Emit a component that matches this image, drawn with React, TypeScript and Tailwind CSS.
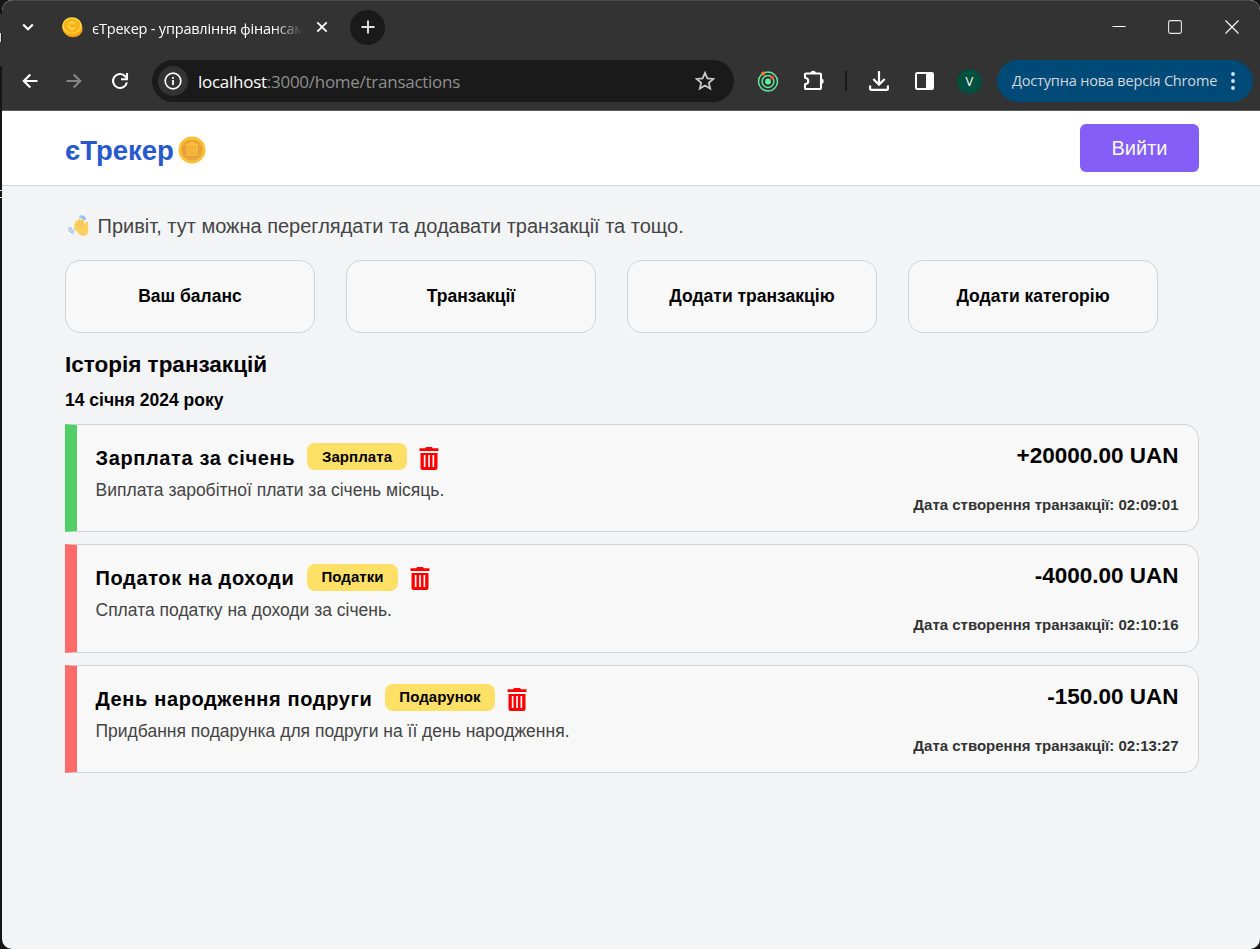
import React from "react";

type Transaction = {
  title: string;
  category: string;
  description: string;
  amount: string;
  time: string;
  accent: string;
  titleWidth: string;
  badgeWidth: string;
};

const transactions: Transaction[] = [
  {
    title: "Зарплата за січень",
    category: "Зарплата",
    description: "Виплата заробітної плати за січень місяць.",
    amount: "+20000.00 UAN",
    time: "02:09:01",
    accent: "border-l-[#51cf66]",
    titleWidth: "w-[211.500px]",
    badgeWidth: "w-[100px]",
  },
  {
    title: "Податок на доходи",
    category: "Податки",
    description: "Сплата податку на доходи за січень.",
    amount: "-4000.00 UAN",
    time: "02:10:16",
    accent: "border-l-[#ff6b6b]",
    titleWidth: "w-[211.500px]",
    badgeWidth: "w-[91px]",
  },
  {
    title: "День народження подруги",
    category: "Подарунок",
    description: "Придбання подарунка для подруги на її день народження.",
    amount: "-150.00 UAN",
    time: "02:13:27",
    accent: "border-l-[#ff6b6b]",
    titleWidth: "w-[289.500px]",
    badgeWidth: "w-[110px]",
  },
];

const menu = ["Ваш баланс", "Транзакції", "Додати транзакцію", "Додати категорію"];

function TabCoin() {
  return (
    <svg width="21" height="21" viewBox="0 0 21 21" className="shrink-0">
      <ellipse cx="11" cy="12.6" rx="9.6" ry="7.6" fill="#f59a0c" />
      <ellipse cx="10.3" cy="10.4" rx="10" ry="8.6" fill="#fba919" />
      <ellipse cx="10" cy="8.6" rx="9.8" ry="8.4" fill="#fed843" />
      <ellipse cx="10" cy="8.8" rx="8.300" ry="7" fill="#fbb417" />
      <path d="M12.9 7.2c-.5-1.2-1.6-1.8-2.9-1.8-1.900 0-3.200 1.300-3.200 3.100s1.300 3.300 3.300 3.300c1.300 0 2.300-.5 2.900-1.500M9.700 4v1.400M10.300 11.800v1.400" fill="none" stroke="#fee05a" strokeWidth="1.200" />
    </svg>
  );
}

function BankCoin() {
  return (
    <svg width="28" height="28" viewBox="0 0 28 28" className="mt-[4px] shrink-0">
      <circle cx="14" cy="14" r="13.500" fill="#fac036" />
      <circle cx="14" cy="14" r="10.600" fill="#e9a23b" />
      <path d="M14 5.500l6.300 3.300v1.700H7.700V8.800zM8.700 11.300h2v6h-2zM11.700 11.300h1.900v6h-1.900zM14.600 11.300h1.900v6h-1.900zM17.500 11.300h2v6h-2zM7.700 18h12.600v1.500H7.700z" fill="#fac036" />
    </svg>
  );
}

function Wave() {
  return (
    <svg width="22" height="22" viewBox="0 0 22 22" className="shrink-0">
      <g fill="none" stroke="#fccf60" strokeLinecap="round" strokeWidth="2.900">
        <path d="M13.500 14L8.300 9.700M14 12.500L9.600 7M15.500 11.500L12 5.200M17 11.500L15 5.300M12 16L8 13" />
      </g>
      <path d="M8.500 12.500L16.800 8L18.300 9.800Q18.300 6 20 6.200Q21.200 6.500 21.200 10V16Q21 20.800 16.500 20.800Q13.300 20.800 11 18.300Z" fill="#fccf60" />
      <path d="M9.300 8.700l4 4.200M11.200 6.200l3.500 5.200M13.800 5.300l2.500 5" fill="none" stroke="#e8a94c" strokeWidth=".5" />
      <path d="M12.500 2.400q3.700-.5 5 2.600M14 1q3.600.2 4.500 3M3.600 12.300q.2 3 3.200 4M1.600 12.800q.3 4 4.600 5.500" fill="none" stroke="#96bdf4" strokeWidth="1.300" strokeLinecap="round" />
    </svg>
  );
}

function Trash() {
  return (
    <svg width="20" height="24" viewBox="0 0 20 24" className="shrink-0">
      <path d="M6.500 1.300V.800Q6.500 0 7.300 0h5.400q.8 0 .8.800v.500H19q.5 0 .5.500V3.500q0 .5-.5.500H1q-.5 0-.5-.500V1.800q0-.500.500-.500z" fill="#ff0000" />
      <path fillRule="evenodd" d="M1.500 6h17v15q0 2-2 2h-13q-2 0-2-2zM4.800 8v12h1.700V8zM9.200 8v12h1.700V8zM13.500 8v12h1.700V8z" fill="#ff0000" />
    </svg>
  );
}

function TabStrip() {
  return (
    <div className="flex h-[52px] items-center text-white">
      <svg width="12" height="8" viewBox="0 0 12 8" className="ml-[19.500px] shrink-0">
        <path d="M1.200 1.500L6 6.200l4.800-4.700" fill="none" stroke="#fff" strokeWidth="2.100" />
      </svg>
      <div className="ml-[28.500px] flex items-center">
        <TabCoin />
        <div className="ml-[9px] w-[211px] overflow-hidden whitespace-nowrap pt-[3px] font-['Open_Sans','Noto_Sans',sans-serif] text-[14.500px] leading-[22px] tracking-[-0.200px] [mask-image:linear-gradient(to_right,#000_86%,transparent)]">
          єТрекер - управління фінансам
        </div>
      </div>
      <svg width="12" height="12" viewBox="0 0 12 12" className="ml-[13px] shrink-0">
        <path d="M1.300 1.300l9.400 9.400M10.700 1.300l-9.400 9.400" stroke="#fff" strokeWidth="1.800" />
      </svg>
      <div className="ml-[22px] flex size-[35px] items-center justify-center rounded-full bg-[#1a1a1a]">
        <svg width="14" height="14" viewBox="0 0 14 14">
          <path d="M7 .5v13M.5 7h13" stroke="#e3e3e3" strokeWidth="1.900" />
        </svg>
      </div>
      <div className="ml-auto mr-[21.500px] flex items-center">
        <svg width="14" height="14" viewBox="0 0 14 14">
          <path d="M.5 6.500h13" stroke="#fff" />
        </svg>
        <svg width="14" height="14" viewBox="0 0 14 14" className="ml-[42px]">
          <rect x=".6" y=".6" width="12.800" height="12.800" rx="1.800" fill="none" stroke="#e8e8e8" strokeWidth="1.100" />
        </svg>
        <svg width="14" height="14" viewBox="0 0 14 14" className="ml-[43px]">
          <path d="M.5 .5l13 13M13.500 .5l-13 13" stroke="#fff" strokeWidth="1.100" />
        </svg>
      </div>
    </div>
  );
}

function Toolbar() {
  return (
    <div className="flex h-[56px] items-center text-white">
      <svg width="16" height="16" viewBox="0 0 16 16" className="ml-[20px] shrink-0">
        <path d="M15.500 8H2M8.300 1.500L1.800 8l6.500 6.500" fill="none" stroke="#fff" strokeWidth="2.100" />
      </svg>
      <svg width="16" height="16" viewBox="0 0 16 16" className="ml-[28px] shrink-0">
        <path d="M.5 8H14M7.700 1.500L14.200 8l-6.500 6.500" fill="none" stroke="#868686" strokeWidth="2.100" />
      </svg>
      <svg width="18" height="18" viewBox="0 0 18 18" className="ml-[28.500px] shrink-0">
        <path d="M15.900 10.400A7 7 0 1 1 14.200 4.200L15.700 6" fill="none" stroke="#fff" strokeWidth="2.100" />
        <path d="M16 1v6.300H10" fill="none" stroke="#fff" strokeWidth="2.100" />
      </svg>
      <div className="ml-[23.500px] flex h-[42px] w-[582px] items-center rounded-full bg-[#1a1a1a]">
        <div className="ml-[6px] flex size-[30px] items-center justify-center rounded-full bg-[#333]">
          <svg width="18" height="18" viewBox="0 0 18 18">
            <circle cx="9" cy="9" r="7.800" fill="none" stroke="#fff" strokeWidth="1.700" />
            <path d="M9 8v5M9 5v1.800" stroke="#fff" strokeWidth="1.800" />
          </svg>
        </div>
        <div className="ml-[10px] whitespace-nowrap pt-[2px] font-['Open_Sans','Noto_Sans',sans-serif] text-[17px] leading-[24px] tracking-[-0.270px] text-[#8f8f8f]">
          <span className="text-white">localhost</span>:3000/home/transactions
        </div>
        <svg width="20" height="20" viewBox="0 0 20 20" className="ml-auto mr-[19px] shrink-0">
          <path d="M10 1.900l2.400 5.500 6 .5-4.600 3.900 1.400 5.800L10 14.500l-5.200 3.100 1.400-5.800L1.600 7.900l6-.5z" fill="none" stroke="#c7c7c7" strokeWidth="1.800" />
        </svg>
      </div>
      <svg width="22" height="22" viewBox="0 0 22 22" className="ml-[22.500px] shrink-0">
        <g fill="none" stroke="#5ee6a0" strokeWidth="1.500">
          <circle cx="11" cy="11.500" r="9.500" />
          <circle cx="11" cy="11.500" r="5.900" />
        </g>
        <circle cx="11" cy="11.500" r="2.900" fill="#63f09a" />
        <circle cx="6.200" cy="3.500" r="2" fill="#f4772e" />
        <circle cx="15.200" cy="7.600" r="2" fill="#f4502e" />
      </svg>
      <svg width="22" height="22" viewBox="0 0 22 22" className="ml-[24px] shrink-0">
        <path d="M3 3.500h14q1 0 1 1v13.500q0 1-1 1H3q-1 0-1-1v-3.700c2-.3 3.300-1.600 3.300-3.300S4 8 2 7.700V4.500q0-1 1-1z" fill="none" stroke="#fff" strokeWidth="2.100" strokeLinejoin="round" />
        <path d="M7.500 3.500a2.700 2.700 0 0 1 5.400 0zM18 8.500a2.700 2.700 0 0 1 0 5.400z" fill="#fff" />
      </svg>
      <div className="ml-[20.500px] h-[20px] w-[2px] bg-[#191919]" />
      <svg width="20" height="20" viewBox="0 0 20 20" className="ml-[22px] shrink-0">
        <path d="M10 0v13M4.300 8l5.700 5.700L15.700 8" fill="none" stroke="#fff" strokeWidth="2.200" />
        <path d="M1.100 14.500v3q0 1.400 1.400 1.400h15q1.400 0 1.400-1.400v-3" fill="none" stroke="#fff" strokeWidth="2.200" />
      </svg>
      <svg width="19" height="18" viewBox="0 0 19 18" className="ml-[26px] shrink-0">
        <rect x="1" y="1" width="17" height="16" rx="1.200" fill="none" stroke="#fff" strokeWidth="2" />
        <path d="M11 1h7v16h-7z" fill="#fff" />
      </svg>
      <div className="ml-[23px] flex size-[25px] items-center justify-center rounded-full bg-[#004f3f] font-['Open_Sans','Noto_Sans',sans-serif] text-[13px] leading-[20px]">
        V
      </div>
      <div className="ml-[15px] flex h-[42px] w-[256px] shrink-0 items-center rounded-full bg-[#004a77] pl-[15px] text-[#d0d8de]">
        <span className="w-[206px] whitespace-nowrap font-['Open_Sans','Noto_Sans',sans-serif] text-[14.500px] leading-[22px] tracking-[-0.170px]">
          Доступна нова версія Chrome
        </span>
        <svg width="4" height="18" viewBox="0 0 4 18" className="ml-[13px] shrink-0" fill="#d3e3fd">
          <circle cx="2" cy="2" r="1.900" />
          <circle cx="2" cy="9" r="1.900" />
          <circle cx="2" cy="16" r="1.900" />
        </svg>
      </div>
    </div>
  );
}

function TransactionCard({ item }: { item: Transaction }) {
  return (
    <article
      className={`flex h-[108.300px] justify-between rounded-r-[15px] border border-l-[12px] border-[#d1d2d4] bg-[#f8f8f8] pl-[18.500px] pr-[19.500px] ${item.accent}`}
    >
      <div>
        <div className="mt-[18.300px] flex h-[27px] items-center">
          <h3 className={`whitespace-nowrap pt-[2.500px] text-[20px] font-bold leading-[24px] tracking-[0.625px] ${item.titleWidth}`}>{item.title}</h3>
          <span className={`flex h-[27px] items-center justify-center rounded-[8px] bg-[#ffe066] text-[15px] font-bold tracking-[0.080px] ${item.badgeWidth}`}>
            {item.category}
          </span>
          <button className="ml-[12px] mt-[4px]">
            <Trash />
          </button>
        </div>
        <p className="mt-[7.600px] whitespace-nowrap text-[17.500px] leading-[24px] text-[#444]">{item.description}</p>
      </div>
      <div className="flex flex-col items-end whitespace-nowrap font-bold">
        <span className="mt-[16.900px] text-[22.500px] leading-[28px]">{item.amount}</span>
        <span className="mt-[24.900px] text-[15px] leading-[20px] text-[#333]">Дата створення транзакції: {item.time}</span>
      </div>
    </article>
  );
}

export default function App() {
  return (
    <div className="flex h-[949px] w-[1260px] bg-[#151515] font-['Liberation_Sans',Arial,sans-serif] text-black">
      <div className="flex w-[2px] shrink-0 flex-col">
        <div className="mt-[14px] h-[19px] bg-[#333]" />
        <div className="h-[9px] w-px bg-[#ddd]" />
        <div className="h-[24px] bg-[#333]" />
        <div className="mt-[124px] h-px bg-[#ddd]" />
        <div className="mt-[6px] h-px bg-[#ddd]" />
      </div>
      <div className="flex flex-1 flex-col overflow-hidden rounded-[10px] bg-[#f3f4f6]">
        <div className="h-[111px] shrink-0 rounded-t-[10px] border-b border-t border-b-[#5d5d5d] border-t-[#484848] bg-[#333]">
          <TabStrip />
          <Toolbar />
        </div>
        <header className="flex h-[75px] shrink-0 items-center border-b border-[#d1d2d4] bg-white pl-[63px] pr-[61px]">
          <span className="w-[113.300px] pt-[5px] text-[27.500px] font-bold leading-[36px] text-[#2759cd]">єТрекер</span>
          <BankCoin />
          <button className="ml-auto h-[48px] w-[119px] rounded-[6px] bg-[#845ef7] text-[20px] text-[#f8f9fa]">Вийти</button>
        </header>
        <main className="pl-[63px] pr-[61px] pt-[27px]">
          <div className="flex h-[26px] items-center pl-[2px]">
            <Wave />
            <p className="ml-[8.500px] whitespace-nowrap text-[20px] text-[#444]">Привіт, тут можна переглядати та додавати транзакції та тощо.</p>
          </div>
          <nav className="mt-[21px] flex gap-[31px]">
            {menu.map((label) => (
              <button key={label} className="h-[73px] w-[250px] rounded-[15px] border border-[#d1d2d4] bg-[#f8f8f8] text-[17.500px] font-bold">
                {label}
              </button>
            ))}
          </nav>
          <h1 className="mt-[18px] text-[22.500px] font-bold leading-[28px]">Історія транзакцій</h1>
          <h2 className="mt-[9px] text-[17.500px] font-bold leading-[24px]">14 січня 2024 року</h2>
          <div className="mt-[12px] flex flex-col gap-[12.150px]">
            {transactions.map((item) => (
              <TransactionCard key={item.time} item={item} />
            ))}
          </div>
        </main>
      </div>
    </div>
  );
}
